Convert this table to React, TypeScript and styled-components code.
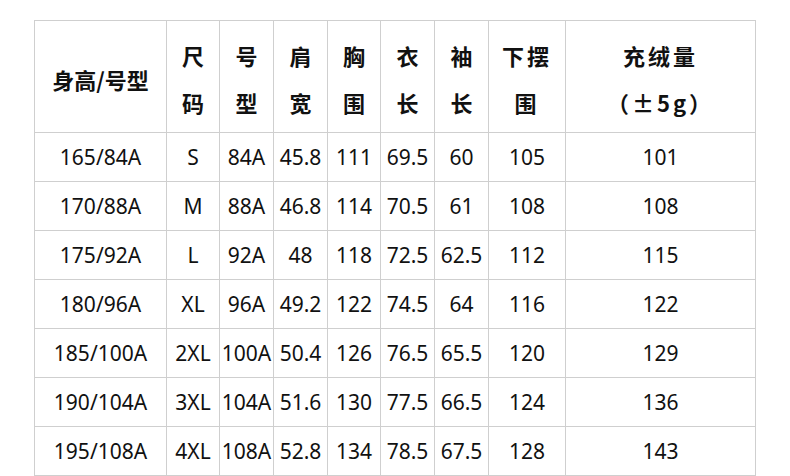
import React from 'react'
import styled, { createGlobalStyle } from 'styled-components'

const GlobalStyle = createGlobalStyle`
  html, body {
    margin: 0;
    padding: 0;
    background: #fff;
  }
`

const Page = styled.div`
  padding: 20px 0 0 34px;
  font-family: "Noto Sans", "Noto Sans CJK SC", sans-serif;
  color: #111;
`

const SizeTable = styled.table`
  border-collapse: collapse;
  table-layout: fixed;
  width: 722px;
`

const Cell = styled.td`
  border: 1px solid #cfcfcf;
  padding: 0;
  text-align: center;
  vertical-align: middle;
  font-size: 21px;
  height: 48px;
  white-space: nowrap;
`

const HeadCell = styled.th<{ spacing?: number }>`
  border: 1px solid #cfcfcf;
  padding: 5px 0 0;
  height: 106px;
  text-align: center;
  vertical-align: middle;
  font-family: "Noto Sans CJK SC", "Noto Sans", sans-serif;
  font-weight: 700;
  font-size: 22px;
  line-height: 47px;
  letter-spacing: ${({ spacing }) => spacing ?? 0}px;
  white-space: nowrap;
`

const widths = [132, 53, 54, 54, 53, 54, 54, 77, 190]

const headers: { lines: string[]; spacing?: number }[] = [
  { lines: ['身高/号型'] },
  { lines: ['尺', '码'] },
  { lines: ['号', '型'] },
  { lines: ['肩', '宽'] },
  { lines: ['胸', '围'] },
  { lines: ['衣', '长'] },
  { lines: ['袖', '长'] },
  { lines: ['下摆', '围'], spacing: 3 },
  { lines: ['充绒量', '（±5g）'], spacing: 3 },
]

const rows = [
  ['165/84A', 'S', '84A', '45.8', '111', '69.5', '60', '105', '101'],
  ['170/88A', 'M', '88A', '46.8', '114', '70.5', '61', '108', '108'],
  ['175/92A', 'L', '92A', '48', '118', '72.5', '62.5', '112', '115'],
  ['180/96A', 'XL', '96A', '49.2', '122', '74.5', '64', '116', '122'],
  ['185/100A', '2XL', '100A', '50.4', '126', '76.5', '65.5', '120', '129'],
  ['190/104A', '3XL', '104A', '51.6', '130', '77.5', '66.5', '124', '136'],
  ['195/108A', '4XL', '108A', '52.8', '134', '78.5', '67.5', '128', '143'],
]

export default function App() {
  return (
    <>
      <GlobalStyle />
      <Page>
        <SizeTable>
          <colgroup>
            {widths.map((w, i) => (
              <col key={i} style={{ width: w }} />
            ))}
          </colgroup>
          <thead>
            <tr>
              {headers.map((h, i) => (
                <HeadCell key={i} spacing={h.spacing}>
                  {h.lines.map((l, j) => (
                    <React.Fragment key={j}>
                      {j > 0 && <br />}
                      {l}
                    </React.Fragment>
                  ))}
                </HeadCell>
              ))}
            </tr>
          </thead>
          <tbody>
            {rows.map((r, i) => (
              <tr key={i}>
                {r.map((v, j) => (
                  <Cell key={j}>{v}</Cell>
                ))}
              </tr>
            ))}
          </tbody>
        </SizeTable>
      </Page>
    </>
  )
}
